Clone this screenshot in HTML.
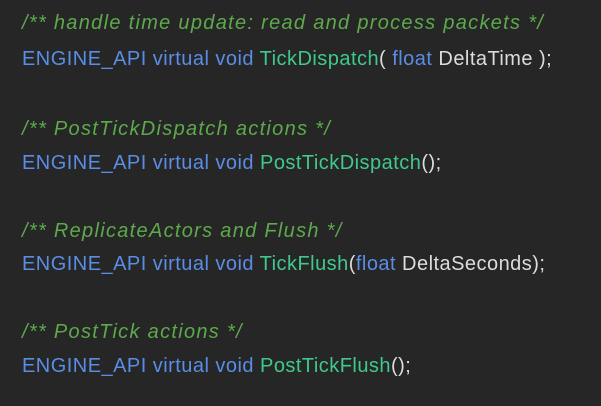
<!DOCTYPE html>
<html><head><style>
html,body{margin:0;padding:0;background:#262626;width:601px;height:406px;overflow:hidden}
.l{position:absolute;left:22px;font-family:"Liberation Sans",sans-serif;font-size:20px;letter-spacing:0.47px;white-space:pre;color:#dcdcdc;line-height:24px}
.c{color:#5daa4c;font-style:italic;letter-spacing:1.3px}
.k{color:#5a8de6}
.f{color:#3fc98c}
</style></head><body>
<div class="l c" style="top:11px">/** handle time update: read and process packets */</div>
<div class="l" style="top:47px"><span class="k">ENGINE_API virtual void </span><span class="f">TickDispatch</span>( <span class="k">float</span> DeltaTime );</div>
<div class="l c" style="top:117px">/** PostTickDispatch actions */</div>
<div class="l" style="top:151px"><span class="k">ENGINE_API virtual void </span><span class="f">PostTickDispatch</span>();</div>
<div class="l c" style="top:219px">/** ReplicateActors and Flush */</div>
<div class="l" style="top:252px"><span class="k">ENGINE_API virtual void </span><span class="f">TickFlush</span>(<span class="k">float</span> DeltaSeconds);</div>
<div class="l c" style="top:320px">/** PostTick actions */</div>
<div class="l" style="top:354px"><span class="k">ENGINE_API virtual void </span><span class="f">PostTickFlush</span>();</div>
</body></html>
